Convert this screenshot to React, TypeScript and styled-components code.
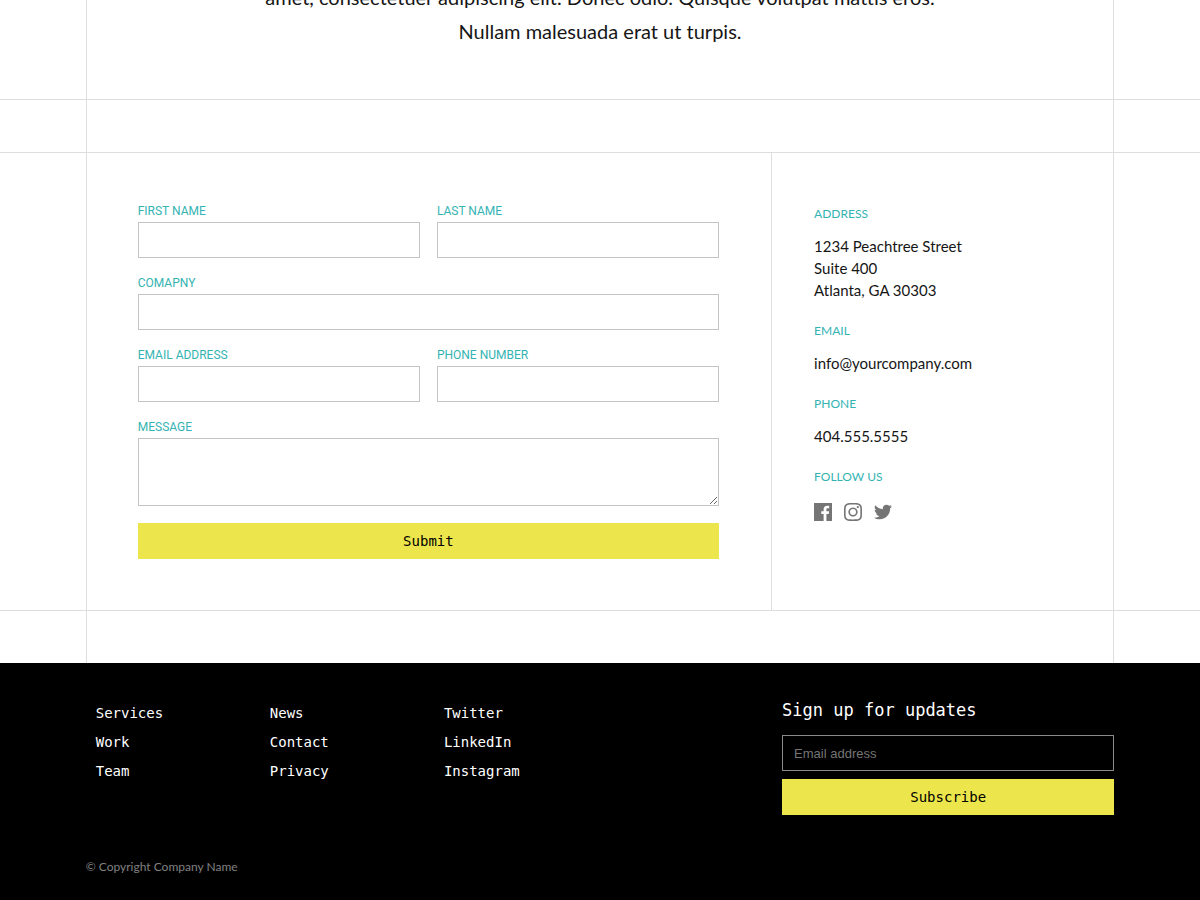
import React from "react";
import styled, { createGlobalStyle } from "styled-components";
import { FaTwitter } from "react-icons/fa";
import { SiInstagram } from "react-icons/si";

const sans = `Lato, "Open Sans", sans-serif`;
const labelSans = `Roboto, "Liberation Sans", sans-serif`;
const mono = `"DejaVu Sans Mono", "Liberation Mono", monospace`;
const line = "#dedede";
const teal = "#34b3b3";
const yellow = "#ece64c";

const GlobalStyle = createGlobalStyle`
  *, *::before, *::after { box-sizing: border-box; }
  body {
    margin: 0;
    background: #fff;
    color: #161616;
    font-family: ${sans};
    font-size: 15px;
    line-height: 22px;
  }
`;

const Band = styled.section<{ $ruled?: boolean }>`
  padding: 0 calc(100% / 14);
  border-bottom: ${(p) => (p.$ruled ? `1px solid ${line}` : "0")};
  overflow: hidden;
`;

const Rails = styled.div`
  border: solid ${line};
  border-width: 0 1px;
`;

const Spacer = styled(Rails)`
  height: 52px;
`;

const Intro = styled.p`
  margin: -20px 0 0;
  padding: 0 160px 51px;
  font-size: 20px;
  line-height: 34px;
  text-align: center;
`;

const ContactRow = styled(Rails)`
  display: grid;
  grid-template-columns: 2fr 1fr;
`;

const Form = styled.form`
  display: grid;
  grid-template-columns: 1fr 1fr;
  gap: 17px;
  padding: 50px 52px 51px 51px;
`;

const Field = styled.div<{ $wide?: boolean }>`
  display: flex;
  flex-direction: column;
  grid-column: ${(p) => (p.$wide ? "1 / -1" : "auto")};
`;

const Label = styled.label`
  height: 19px;
  color: ${teal};
  font: 12px/16px ${labelSans};
  text-transform: uppercase;
`;

const TextInput = styled.input`
  width: 100%;
  height: 36px;
  padding: 0 11px;
  border: 1px solid #c4c4c4;
  border-radius: 0;
  background: #fff;
  font: 13px ${sans};
`;

const TextArea = styled.textarea`
  display: block;
  width: 100%;
  height: 68px;
  padding: 10px;
  border: 1px solid #c4c4c4;
  border-radius: 0;
  font: 13px ${sans};
  resize: vertical;
`;

const Button = styled.button`
  width: 100%;
  height: 36px;
  padding: 0;
  border: 0;
  background: ${yellow};
  color: #000;
  font: 14px ${mono};
  cursor: pointer;
`;

const SubmitButton = styled(Button)`
  grid-column: 1 / -1;
`;

const Details = styled.aside`
  display: flex;
  flex-direction: column;
  gap: 22px;
  padding: 53px 42px;
  border-left: 1px solid ${line};
`;

const DetailHeading = styled.h2`
  margin: 0 0 13px;
  color: ${teal};
  font-size: 12px;
  font-weight: 400;
  line-height: 16px;
  text-transform: uppercase;
`;

const DetailText = styled.p`
  margin: 0;
`;

const PlainLink = styled.a`
  color: inherit;
  text-decoration: none;
`;

const Socials = styled.div`
  display: flex;
  gap: 12px;
  padding-top: 5px;
`;

const SocialLink = styled.a`
  display: block;
  height: 18px;
  color: #757575;

  svg {
    display: block;
    width: 18px;
    height: 18px;
  }
`;

const Footer = styled.footer`
  padding: 36px calc(100% / 14) 22px;
  background: #000;
  color: #fff;
`;

const FooterGrid = styled.div`
  display: grid;
  grid-template-columns: repeat(4, 174fr) 332fr;
`;

const LinkList = styled.ul`
  margin: 0;
  padding: 0 10px;
  list-style: none;
  font: 14px/29px ${mono};
`;

const Signup = styled.form`
  display: flex;
  flex-direction: column;
  grid-column: 5;
`;

const SignupLabel = styled.label`
  height: 36px;
  font: 17px/22px ${mono};
`;

const SignupInput = styled(TextInput)`
  margin-bottom: 8px;
  border-color: #8a8a8a;
  background: #000;
  color: #fff;
  font: 13px "Liberation Sans", Arial, sans-serif;

  &::placeholder {
    color: #757575;
    opacity: 1;
  }
`;

const Copyright = styled.p`
  margin: 41px 0 0;
  color: #808080;
  font-size: 12px;
`;

const FacebookIcon = () => (
  <svg viewBox="0 0 24 24" fill="currentColor" aria-hidden="true">
    <path d="M24 0H0v24h12.818v-9.294H9.689v-3.621h3.129V8.41c0-3.099 1.894-4.785 4.659-4.785 1.325 0 2.464.097 2.796.141v3.24h-1.921c-1.5 0-1.792.721-1.792 1.771v2.311h3.584l-.465 3.63H16.56V24H24z" />
  </svg>
);

const linkColumns = [
  ["Services", "Work", "Team"],
  ["News", "Contact", "Privacy"],
  ["Twitter", "LinkedIn", "Instagram"],
];

function TextField({ id, label, type = "text", wide }: { id: string; label: string; type?: string; wide?: boolean }) {
  return (
    <Field $wide={wide}>
      <Label htmlFor={id}>{label}</Label>
      <TextInput id={id} type={type} />
    </Field>
  );
}

export default function App() {
  return (
    <>
      <GlobalStyle />
      <main>
        <Band $ruled>
          <Rails>
            <Intro>
              amet, consectetuer adipiscing elit. Donec odio. Quisque volutpat mattis eros.
              <br />
              Nullam malesuada erat ut turpis.
            </Intro>
          </Rails>
        </Band>
        <Band $ruled>
          <Spacer />
        </Band>
        <Band $ruled>
          <ContactRow>
            <Form onSubmit={(e) => e.preventDefault()}>
              <TextField id="first-name" label="First Name" />
              <TextField id="last-name" label="Last Name" />
              <TextField id="company" label="Comapny" wide />
              <TextField id="email" label="Email Address" type="email" />
              <TextField id="phone" label="Phone Number" type="tel" />
              <Field $wide>
                <Label htmlFor="message">Message</Label>
                <TextArea id="message" />
              </Field>
              <SubmitButton type="submit">Submit</SubmitButton>
            </Form>
            <Details>
              <div>
                <DetailHeading>Address</DetailHeading>
                <DetailText>
                  1234 Peachtree Street
                  <br />
                  Suite 400
                  <br />
                  Atlanta, GA 30303
                </DetailText>
              </div>
              <div>
                <DetailHeading>Email</DetailHeading>
                <DetailText>
                  <PlainLink href="mailto:info@yourcompany.com">info@yourcompany.com</PlainLink>
                </DetailText>
              </div>
              <div>
                <DetailHeading>Phone</DetailHeading>
                <DetailText>404.555.5555</DetailText>
              </div>
              <div>
                <DetailHeading>Follow us</DetailHeading>
                <Socials>
                  <SocialLink href="#facebook" aria-label="Facebook">
                    <FacebookIcon />
                  </SocialLink>
                  <SocialLink href="#instagram" aria-label="Instagram">
                    <SiInstagram />
                  </SocialLink>
                  <SocialLink href="#twitter" aria-label="Twitter">
                    <FaTwitter />
                  </SocialLink>
                </Socials>
              </div>
            </Details>
          </ContactRow>
        </Band>
        <Band>
          <Spacer />
        </Band>
      </main>
      <Footer>
        <FooterGrid>
          {linkColumns.map((links) => (
            <LinkList key={links[0]}>
              {links.map((text) => (
                <li key={text}>
                  <PlainLink href={`#${text.toLowerCase()}`}>{text}</PlainLink>
                </li>
              ))}
            </LinkList>
          ))}
          <Signup onSubmit={(e) => e.preventDefault()}>
            <SignupLabel htmlFor="signup-email">Sign up for updates</SignupLabel>
            <SignupInput id="signup-email" type="email" placeholder="Email address" />
            <Button type="submit">Subscribe</Button>
          </Signup>
        </FooterGrid>
        <Copyright>© Copyright Company Name</Copyright>
      </Footer>
    </>
  );
}
